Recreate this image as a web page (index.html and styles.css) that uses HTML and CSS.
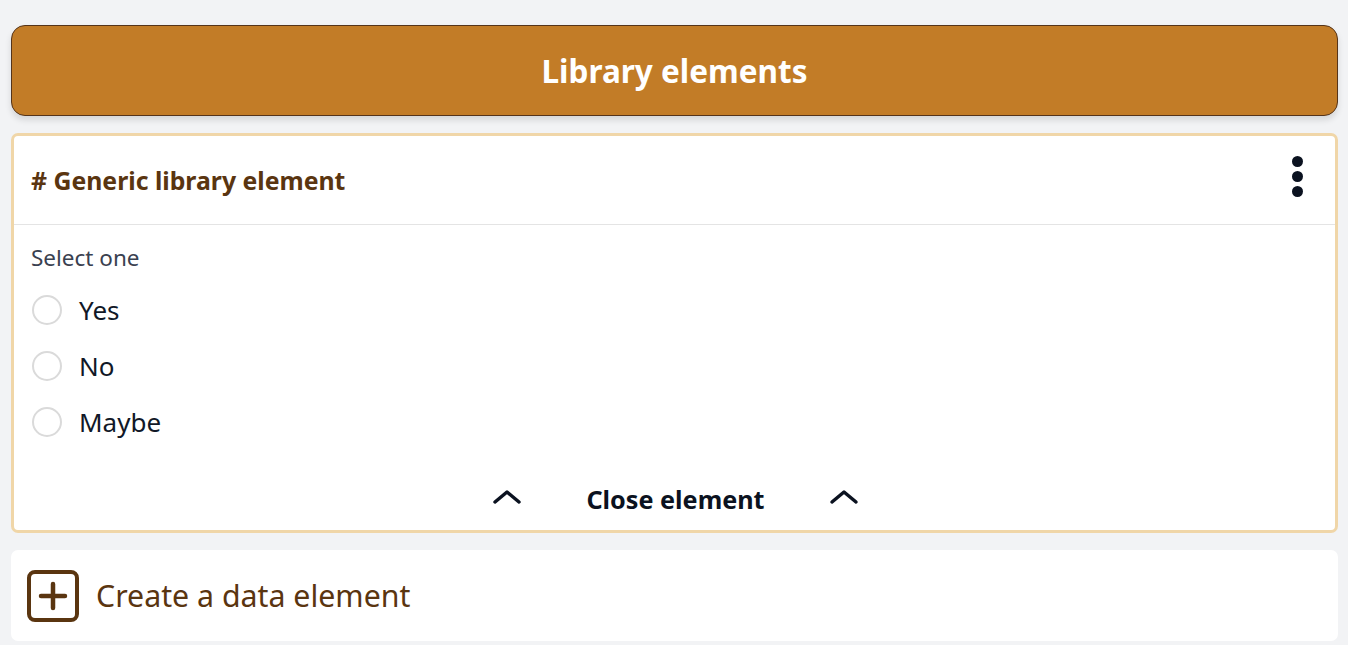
FILE: index.html
```html
<!DOCTYPE html>
<html>
<head>
<meta charset="utf-8">
<link rel="stylesheet" href="styles.css">
</head>
<body>
<div class="page">
  <div class="banner">Library elements</div>
  <div class="card">
    <div class="card-head">
      <div class="card-title"># Generic library element</div>
      <div class="kebab"><span></span><span></span><span></span></div>
    </div>
    <div class="card-body">
      <div class="question">Select one</div>
      <label class="opt"><span class="radio"></span><span>Yes</span></label>
      <label class="opt"><span class="radio"></span><span>No</span></label>
      <label class="opt"><span class="radio"></span><span>Maybe</span></label>
      <div class="close-row">
        <svg class="chev" viewBox="0 0 30 16" width="30" height="16"><path d="M3 13 L15 3 L27 13" fill="none" stroke="#0b1220" stroke-width="3.5" stroke-linecap="round" stroke-linejoin="round"/></svg>
        <span class="close-text">Close element</span>
        <svg class="chev" viewBox="0 0 30 16" width="30" height="16"><path d="M3 13 L15 3 L27 13" fill="none" stroke="#0b1220" stroke-width="3.5" stroke-linecap="round" stroke-linejoin="round"/></svg>
      </div>
    </div>
  </div>
  <div class="create">
    <svg class="plus" viewBox="0 0 54 54" width="54" height="54"><rect x="3" y="3" width="48" height="48" rx="6" fill="none" stroke="#5a3510" stroke-width="4"/><path d="M27 15 V39 M15 27 H39" stroke="#5a3510" stroke-width="4.5" stroke-linecap="round"/></svg>
    <span class="create-text">Create a data element</span>
  </div>
</div>
</body>
</html>
```
FILE: styles.css
```css
html, body { margin: 0; padding: 0; }
body {
  background: #f2f3f5;
  font-family: "Noto Sans", "Open Sans", sans-serif;
  width: 1348px;
  height: 645px;
  overflow: hidden;
}
.page {
  padding: 25px 10px 0 11px;
  display: flex;
  flex-direction: column;
}
.banner {
  height: 89px;
  background: #c27c27;
  border: 1px solid #55341a;
  border-radius: 14px;
  box-shadow: 0 4px 6px rgba(0,0,0,0.12);
  color: #fff;
  font-weight: 700;
  font-size: 31.5px;
  display: flex;
  align-items: center;
  justify-content: center;
}
.card {
  margin-top: 17px;
  background: #fff;
  border: 3px solid #f0d6a8;
  border-radius: 7px;
}
.card-head {
  height: 88px;
  border-bottom: 1px solid #e4e4e4;
  display: flex;
  align-items: center;
  justify-content: space-between;
  padding: 0 32px 0 17px;
}
.card-title {
  color: #5a3510;
  font-weight: 700;
  font-size: 24.8px;
}
.kebab {
  display: flex;
  flex-direction: column;
  gap: 4px;
  margin-top: -8px;
}
.kebab span {
  width: 11px;
  height: 11px;
  border-radius: 50%;
  background: #0b1220;
}
.card-body {
  padding: 18px 17px 0 17px;
}
.question {
  color: #3a4150;
  font-size: 22.5px;
  height: 30px;
  line-height: 30px;
  margin-bottom: 9px;
}
.opt {
  display: flex;
  align-items: center;
  height: 56px;
  gap: 18px;
  font-size: 26px;
  color: #111827;
}
.radio {
  width: 30px;
  height: 30px;
  border: 2px solid #dadada;
  border-radius: 50%;
  box-sizing: border-box;
  margin-left: 1px;
  flex: none;
}
.opt span:last-child { margin-left: -1px; }
.close-row {
  margin-top: 18px;
  height: 62px;
  display: flex;
  align-items: center;
  justify-content: center;
  gap: 64px;
  padding-left: 2px;
}
.close-text {
  font-weight: 700;
  font-size: 25.2px;
  color: #0b1220;
}
.chev { margin-top: -4px; }
.create {
  margin-top: 17px;
  height: 91px;
  background: #fff;
  border-radius: 7px;
  display: flex;
  align-items: center;
  padding-left: 15px;
  gap: 16px;
}
.create-text {
  color: #5a3510;
  font-size: 30.3px;
}
```
